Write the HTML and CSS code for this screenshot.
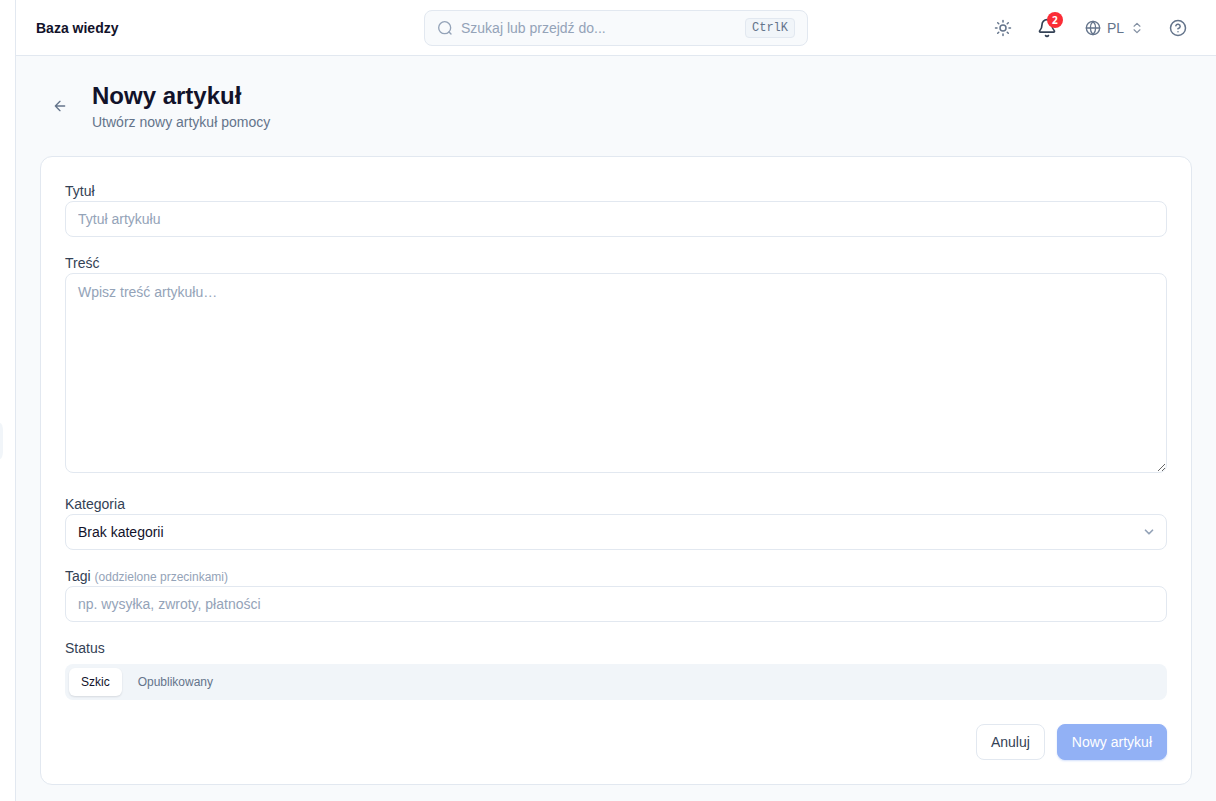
FILE: index.html
```
<!DOCTYPE html>
<html lang="pl">
<head>
    <meta charset="UTF-8">
    <meta name="viewport" content="width=device-width, initial-scale=1.0">
    <title>Nowy artykuł - Baza wiedzy</title>
    <link rel="stylesheet" href="styles.css">
</head>
<body>

<aside class="sidebar">
    <div class="sidebar-active"></div>
</aside>

<div class="content">
    <header class="topbar">
        <div class="topbar-title">Baza wiedzy</div>

        <button type="button" class="search">
            <svg class="icon" width="16" height="16" viewBox="0 0 24 24"><circle cx="11.5" cy="11.5" r="9"/><path d="m21 21-3-3"/></svg>
            <span class="search-text">Szukaj lub przejdź do...</span>
            <kbd>CtrlK</kbd>
        </button>

        <div class="topbar-actions">
            <button type="button" class="icon-btn" aria-label="Motyw">
                <svg class="icon" width="18" height="18" viewBox="0 0 24 24"><circle cx="12" cy="12" r="4"/><path d="M12 2v2M12 20v2M4.93 4.93l1.41 1.41M17.66 17.66l1.41 1.41M2 12h2M20 12h2M6.34 17.66l-1.41 1.41M19.07 4.93l-1.41 1.41"/></svg>
            </button>
            <button type="button" class="icon-btn bell" aria-label="Powiadomienia">
                <svg class="icon" width="20" height="20" viewBox="0 0 24 24"><path d="M10.27 21a2 2 0 0 0 3.46 0"/><path d="M3.26 15.33A1 1 0 0 0 4 17h16a1 1 0 0 0 .74-1.67C19.41 13.96 18 12.5 18 8A6 6 0 0 0 6 8c0 4.5-1.41 5.96-2.74 7.33"/></svg>
                <span class="badge">2</span>
            </button>
            <button type="button" class="lang">
                <svg class="icon" width="16" height="16" viewBox="0 0 24 24"><circle cx="12" cy="12" r="10"/><path d="M12 2a14.5 14.5 0 0 0 0 20 14.5 14.5 0 0 0 0-20M2 12h20"/></svg>
                <span>PL</span>
                <svg class="icon lang-arrows" width="14" height="14" viewBox="0 0 24 24"><path d="m7 15 5 5 5-5M7 9l5-5 5 5"/></svg>
            </button>
            <button type="button" class="icon-btn" aria-label="Pomoc">
                <svg class="icon" width="18" height="18" viewBox="0 0 24 24"><circle cx="12" cy="12" r="10"/><path d="M9.09 9a3 3 0 0 1 5.83 1c0 2-3 3-3 3M12 17h.01"/></svg>
            </button>
        </div>
    </header>

    <main>
        <div class="page-header">
            <a href="#" class="back" aria-label="Wstecz">
                <svg class="icon" width="16" height="16" viewBox="0 0 24 24"><path d="m12 19-7-7 7-7M19 12H5"/></svg>
            </a>
            <div>
                <h1>Nowy artykuł</h1>
                <p>Utwórz nowy artykuł pomocy</p>
            </div>
        </div>

        <form class="card">
            <div class="field">
                <label for="title">Tytuł</label>
                <input type="text" id="title" class="control" placeholder="Tytuł artykułu">
            </div>
            <div class="field">
                <label for="body">Treść</label>
                <textarea id="body" class="control" placeholder="Wpisz treść artykułu…"></textarea>
            </div>
            <div class="field">
                <label for="category">Kategoria</label>
                <div class="select-wrap">
                    <select id="category" class="control">
                        <option>Brak kategorii</option>
                    </select>
                    <svg class="icon" width="14" height="14" viewBox="0 0 24 24"><path d="m6 9 6 6 6-6"/></svg>
                </div>
            </div>
            <div class="field">
                <label for="tags">Tagi <span class="hint">(oddzielone przecinkami)</span></label>
                <input type="text" id="tags" class="control" placeholder="np. wysyłka, zwroty, płatności">
            </div>
            <div class="field">
                <span class="label" id="status-label">Status</span>
                <div class="tabs" role="group" aria-labelledby="status-label">
                    <button type="button" class="tab active">Szkic</button>
                    <button type="button" class="tab">Opublikowany</button>
                </div>
            </div>
            <div class="form-actions">
                <button type="button" class="btn">Anuluj</button>
                <button type="submit" class="btn btn-primary" disabled>Nowy artykuł</button>
            </div>
        </form>
    </main>
</div>

</body>
</html>
```
FILE: styles.css
```
* {
    box-sizing: border-box;
}
body {
    margin: 0;
    min-height: 100vh;
    display: flex;
    font-family: "Liberation Sans", Arial, sans-serif;
    font-size: 14px;
    line-height: 20px;
    color: #12122a;
    background: #f8fafc;
}
button, input, select, textarea {
    font: inherit;
    color: inherit;
}
button {
    border: none;
    background: none;
    padding: 0;
    cursor: pointer;
}
.icon {
    display: block;
    flex-shrink: 0;
    fill: none;
    stroke: currentColor;
    stroke-width: 2;
    stroke-linecap: round;
    stroke-linejoin: round;
}

/* sidebar */
.sidebar {
    flex: 0 0 16px;
    display: flex;
    align-items: center;
    background: #fff;
    border-right: 1px solid #e2e8f0;
}
.sidebar-active {
    width: 3px;
    height: 36px;
    margin-top: 80px;
    background: #f1f5f9;
    border-radius: 0 3px 3px 0 / 0 8px 8px 0;
}

/* top bar */
.content {
    flex: 1;
    min-width: 0;
}
.topbar {
    height: 56px;
    display: grid;
    grid-template-columns: 1fr minmax(0, 384px) 1fr;
    align-items: center;
    padding: 0 20px;
    background: #fff;
    border-bottom: 1px solid #e2e8f0;
}
.topbar-title {
    font-weight: bold;
}
.search {
    display: flex;
    align-items: center;
    gap: 8px;
    height: 36px;
    padding: 0 12px;
    background: #f8fafc;
    border: 1px solid #e2e8f0;
    border-radius: 8px;
    color: #94a3b8;
    text-align: left;
}
.search-text {
    flex: 1;
}
kbd {
    padding: 0 6px;
    font-family: "Liberation Mono", monospace;
    font-size: 12px;
    line-height: 18px;
    color: #64748b;
    background: #f1f5f9;
    border: 1px solid #e2e8f0;
    border-radius: 4px;
}
.topbar-actions {
    display: flex;
    justify-content: flex-end;
    gap: 8px;
    color: #64748b;
}
.icon-btn {
    width: 36px;
    height: 36px;
    display: flex;
    align-items: center;
    justify-content: center;
}
.bell {
    position: relative;
    color: #334155;
}
.badge {
    position: absolute;
    top: 2px;
    right: 2px;
    width: 16px;
    height: 16px;
    border-radius: 50%;
    background: #fb2c36;
    color: #fff;
    font-family: "Noto Sans", sans-serif;
    font-size: 10px;
    font-weight: bold;
    line-height: 16px;
    text-align: center;
}
.lang {
    display: flex;
    align-items: center;
    gap: 6px;
    height: 36px;
    padding: 0 8px 0 12px;
}
.lang-arrows {
    opacity: 0.8;
}

/* page */
main {
    padding: 24px 24px 16px;
}
.page-header {
    display: flex;
    align-items: center;
    gap: 12px;
    margin-bottom: 24px;
}
.back {
    width: 40px;
    height: 36px;
    display: flex;
    align-items: center;
    justify-content: center;
    color: #64748b;
}
h1 {
    margin: 0;
    font-size: 24px;
    line-height: 32px;
}
.page-header p {
    margin: 0;
    color: #64748b;
}

/* form */
.card {
    display: flex;
    flex-direction: column;
    gap: 16px;
    padding: 24px;
    background: #fff;
    border: 1px solid #e2e8f0;
    border-radius: 12px;
}
label, .label {
    display: block;
    color: #334155;
}
.hint {
    font-size: 12px;
    line-height: 16px;
    color: #94a3b8;
}
.control {
    display: block;
    width: 100%;
    height: 36px;
    padding: 0 12px;
    background: #fff;
    border: 1px solid #e2e8f0;
    border-radius: 8px;
    outline: none;
}
.control::placeholder {
    color: #94a3b8;
}
textarea.control {
    height: 200px;
    padding: 8px 12px;
    margin-bottom: 5px;
    resize: vertical;
}
.select-wrap {
    position: relative;
}
select.control {
    appearance: none;
}
.select-wrap .icon {
    position: absolute;
    top: 11px;
    right: 11px;
    color: #94a3b8;
    stroke-width: 3;
    pointer-events: none;
}
.tabs {
    display: flex;
    gap: 4px;
    margin-top: 6px;
    padding: 4px;
    background: #f1f5f9;
    border-radius: 8px;
}
.tab {
    height: 28px;
    padding: 0 12px;
    font-size: 12px;
    color: #64748b;
    border-radius: 6px;
}
.tab.active {
    background: #fff;
    color: #12122a;
    box-shadow: 0 1px 2px rgba(15, 23, 42, 0.12);
}
.form-actions {
    display: flex;
    justify-content: flex-end;
    gap: 12px;
    margin-top: 8px;
}
.btn {
    height: 36px;
    padding: 0 14px;
    color: #334155;
    background: #fff;
    border: 1px solid #e2e8f0;
    border-radius: 8px;
}
.btn-primary {
    color: #fff;
    background: #92b1f5;
    border-color: #92b1f5;
    box-shadow: 0 1px 2px rgba(37, 99, 235, 0.2);
}
```
